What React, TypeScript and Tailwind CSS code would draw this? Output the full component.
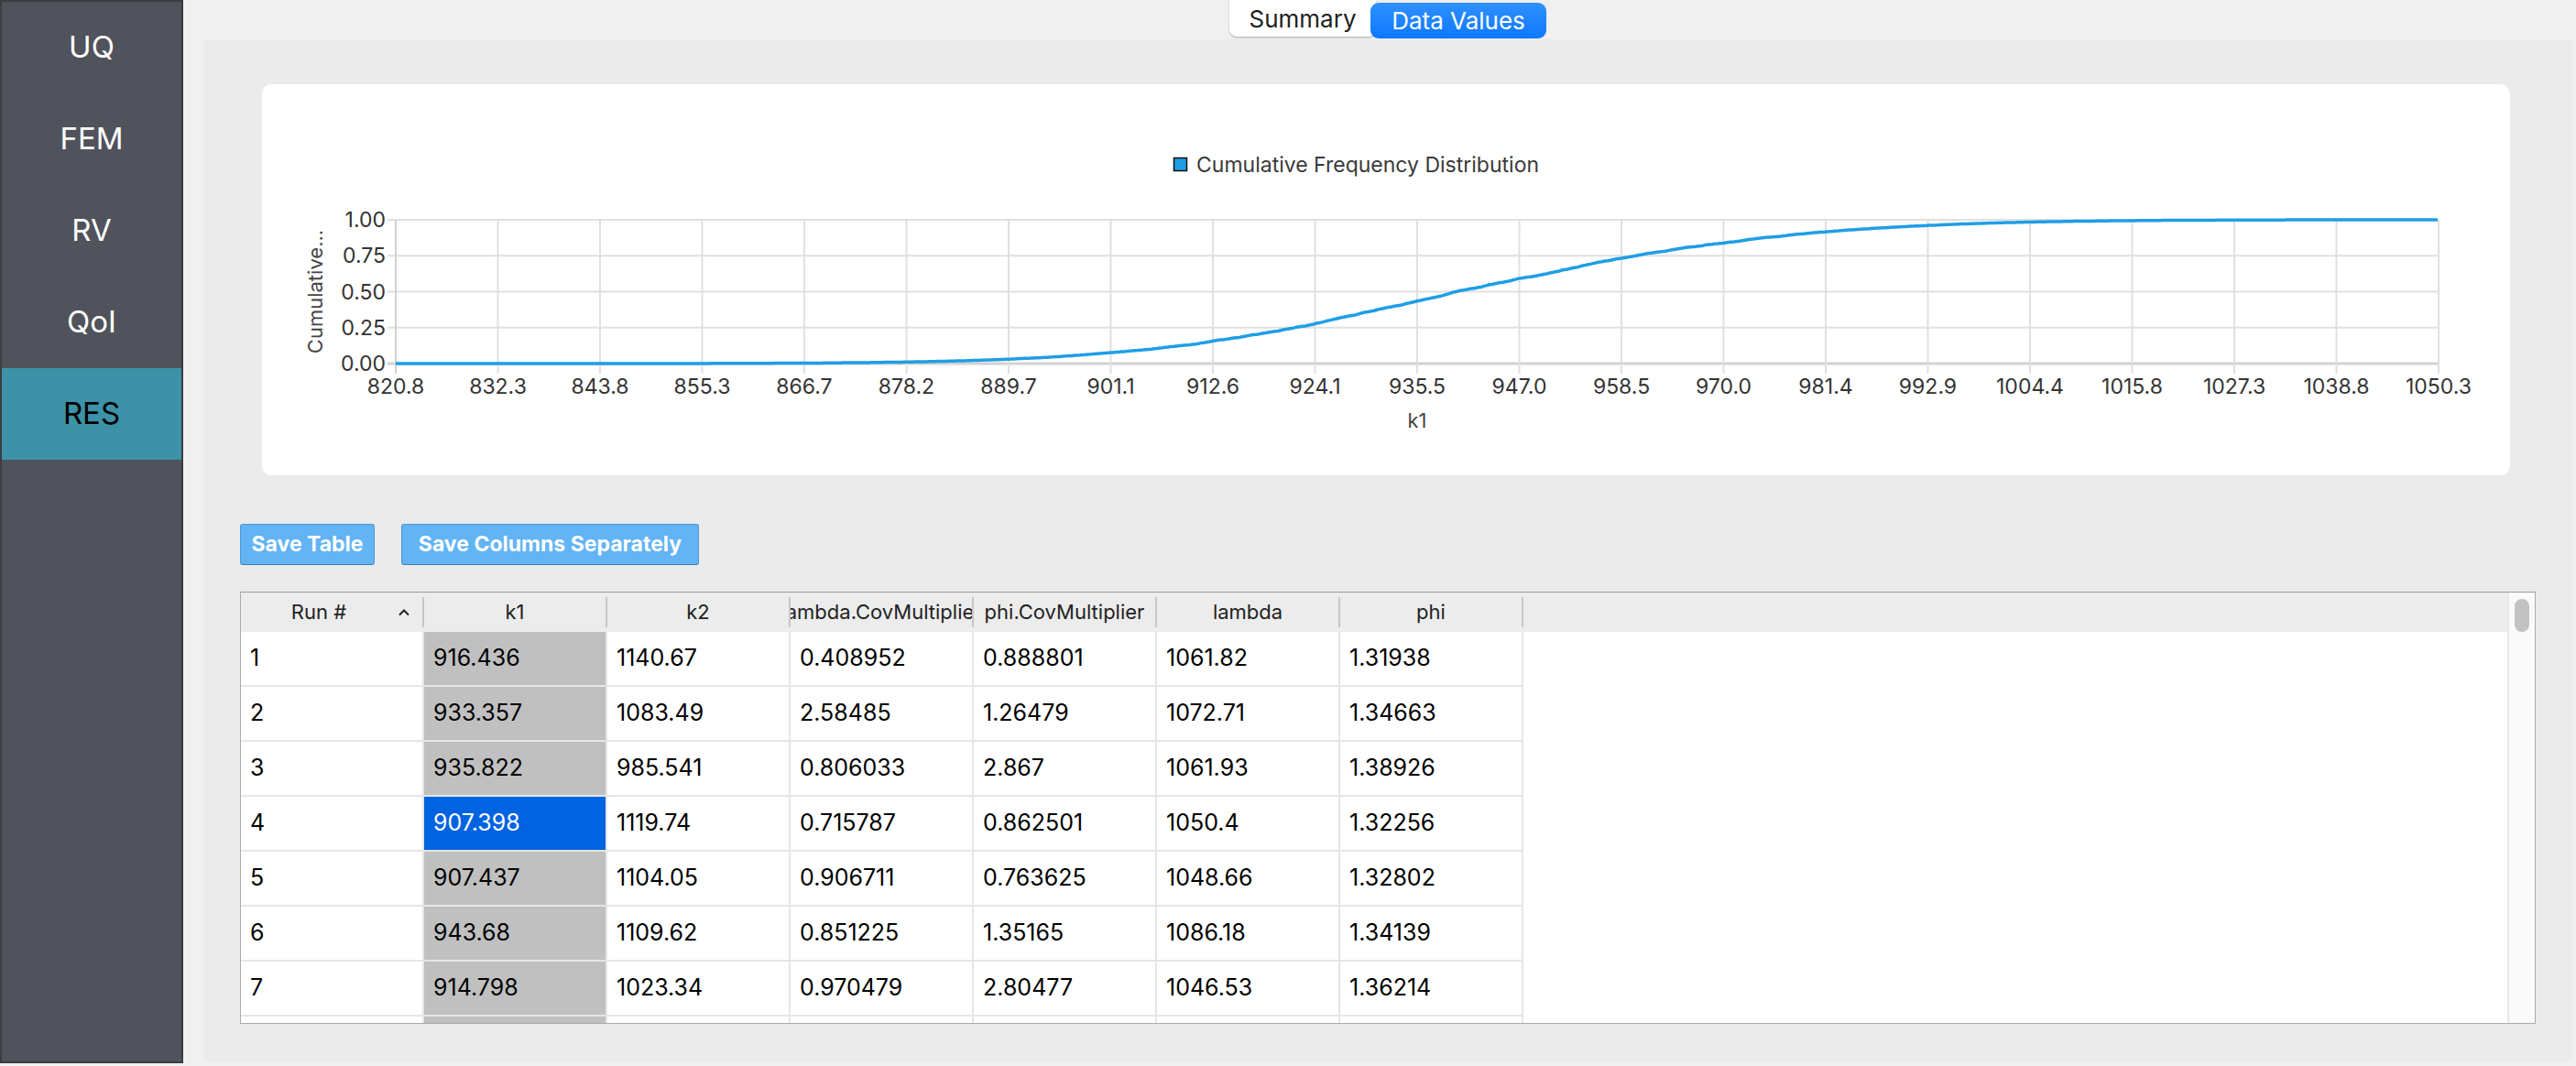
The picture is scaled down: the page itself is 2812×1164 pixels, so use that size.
import React from 'react';

const navItems = ['UQ', 'FEM', 'RV', 'QoI', 'RES'];

const columns = ['Run #', 'k1', 'k2', 'lambda.CovMultiplier', 'phi.CovMultiplier', 'lambda', 'phi'];

const rows: string[][] = [
  ['1', '916.436', '1140.67', '0.408952', '0.888801', '1061.82', '1.31938'],
  ['2', '933.357', '1083.49', '2.58485', '1.26479', '1072.71', '1.34663'],
  ['3', '935.822', '985.541', '0.806033', '2.867', '1061.93', '1.38926'],
  ['4', '907.398', '1119.74', '0.715787', '0.862501', '1050.4', '1.32256'],
  ['5', '907.437', '1104.05', '0.906711', '0.763625', '1048.66', '1.32802'],
  ['6', '943.68', '1109.62', '0.851225', '1.35165', '1086.18', '1.34139'],
  ['7', '914.798', '1023.34', '0.970479', '2.80477', '1046.53', '1.36214'],
  ['', '', '', '', '', '', ''],
];

const xTicks = [
  '820.8', '832.3', '843.8', '855.3', '866.7', '878.2', '889.7', '901.1', '912.6', '924.1', '935.5',
  '947.0', '958.5', '970.0', '981.4', '992.9', '1004.4', '1015.8', '1027.3', '1038.8', '1050.3',
];
const yTicks = ['1.00', '0.75', '0.50', '0.25', '0.00'];

// plot box inside the card
const PX0 = 146;
const PW = 2230;
const PY0 = 148;
const PH = 157;

function erf(v: number) {
  const s = Math.sign(v);
  const x = Math.abs(v);
  const t = 1 / (1 + 0.3275911 * x);
  const y = 1 - ((((1.061405429 * t - 1.453152027) * t + 1.421413741) * t - 0.284496736) * t + 0.254829592) * t * Math.exp(-x * x);
  return s * y;
}

function cdf(k: number) {
  const sd = k < 940 ? 27 : 30;
  return 0.5 * (1 + erf((k - 940) / (sd * Math.SQRT2)));
}

function curvePoints() {
  const pts: string[] = [];
  let seed = 7;
  let drift = 0;
  for (let px = 0; px <= PW; px += 3) {
    seed = (seed * 1103515245 + 12345) % 2147483648;
    const r = seed / 2147483648 - 0.5;
    drift = drift * 0.9 + r * 0.004;
    const k = 820.8 + (px / PW) * 229.5;
    let f = cdf(k);
    f = Math.min(1, Math.max(0, f + drift * f * (1 - f) * 4));
    pts.push(`${(PX0 + px).toFixed(1)},${(PY0 + PH - f * PH).toFixed(1)}`);
  }
  return pts.join(' ');
}

const CdfChart: React.FC = () => {
  const step = PW / 20;
  return (
    <svg width="2454" height="427" viewBox="0 0 2454 427" className="block">
      {/* legend */}
      <rect x="995.5" y="80.5" width="14" height="14" fill="#1f9ee6" stroke="#111" strokeWidth="1.5" />
      <text x="1020" y="96" fontSize="23" fill="#3a3a3a">Cumulative Frequency Distribution</text>

      {/* grid */}
      {yTicks.map((_, i) => {
        const y = PY0 + (i * PH) / 4;
        return <line key={'h' + i} x1={PX0 - 9} x2={PX0 + PW} y1={y} y2={y} stroke={i === 4 ? '#d2d2d2' : '#e0e0e0'} strokeWidth={i === 4 ? 3 : 2} />;
      })}
      {xTicks.map((_, i) => {
        const x = PX0 + i * step;
        return <line key={'v' + i} x1={x} x2={x} y1={PY0} y2={PY0 + PH + 11} stroke={i === 0 ? '#d2d2d2' : '#e0e0e0'} strokeWidth="2" />;
      })}

      {/* y labels */}
      {yTicks.map((t, i) => (
        <text key={t} x="135" y={PY0 + (i * PH) / 4 + 8} fontSize="23" fill="#333" textAnchor="end">{t}</text>
      ))}
      <text x="60" y="226.5" fontSize="22" fill="#444" textAnchor="middle" dominantBaseline="middle" transform="rotate(-90 60 226.5)">Cumulative...</text>

      {/* x labels */}
      {xTicks.map((t, i) => (
        <text key={t} x={PX0 + i * step} y="338" fontSize="23" fill="#333" textAnchor="middle">{t}</text>
      ))}
      <text x={PX0 + PW / 2} y="375" fontSize="22" fill="#444" textAnchor="middle">k1</text>

      <polyline points={curvePoints()} fill="none" stroke="#1f9ee6" strokeWidth="3.5" strokeLinejoin="round" />
    </svg>
  );
};

const ResultsTable: React.FC = () => {
  return (
    <div className="mt-[29px] flex h-[472px] border border-[#ababab] border-t-[#999999]">
      <div className="flex min-w-0 flex-1 flex-col">
        <div className="flex h-[43px] shrink-0 bg-[#ececec]">
          {columns.map((c, i) => (
            <div key={c} className="flex h-full w-[200px] shrink-0 items-center">
              <div className="relative flex h-full min-w-0 flex-1 items-center justify-center overflow-hidden whitespace-nowrap text-[22px] text-[#222]">
                {i === 0 ? (
                  <>
                    <span className="pr-[28px]">{c}</span>
                    <svg width="14" height="9" viewBox="0 0 14 9" className="absolute right-[13px] top-[17px]">
                      <path d="M2 7.5 L7 2.5 L12 7.5" fill="none" stroke="#222" strokeWidth="2" />
                    </svg>
                  </>
                ) : (
                  c
                )}
              </div>
              <div className="h-[33px] w-[2px] shrink-0 bg-[#c6c6c6]" />
            </div>
          ))}
        </div>
        <div className="flex-1 overflow-hidden bg-white">
          {rows.map((r, ri) => (
            <div key={ri} className="flex h-[60px]">
              {r.map((v, ci) => (
                <div
                  key={ci}
                  className={
                    ci === 1
                      ? ri === 3
                        ? 'flex h-full w-[200px] shrink-0 items-center border-b-2 border-r-2 border-[#e6e6e6] bg-[#0063e1] pl-[10px] text-[25px] text-white'
                        : 'flex h-full w-[200px] shrink-0 items-center border-b-2 border-r-2 border-[#e6e6e6] bg-[#c0c0c0] pl-[10px] text-[25px] text-black'
                      : 'flex h-full w-[200px] shrink-0 items-center border-b-2 border-r-2 border-[#e6e6e6] bg-white pl-[10px] text-[25px] text-black'
                  }
                >
                  {v}
                </div>
              ))}
            </div>
          ))}
        </div>
      </div>
      <div className="w-[30px] shrink-0 border-l-2 border-[#e8e8e8] bg-[#fafafa] pt-[7px]">
        <div className="mx-auto h-[36px] w-[16px] rounded-full bg-[#c2c2c2]" />
      </div>
    </div>
  );
};

const App: React.FC = () => {
  return (
    <div className="flex h-[1164px] w-[2812px] overflow-hidden bg-[#f0f0f0] font-['Inter','Liberation_Sans',sans-serif]">
      <aside className="h-[1161px] w-[200px] shrink-0 border-2 border-[#3a3d42] bg-[#50535b]">
        {navItems.map((n) => (
          <div
            key={n}
            className={
              n === 'RES'
                ? 'flex h-[100px] items-center justify-center bg-[#3d92a7] text-[33px] text-black'
                : 'flex h-[100px] items-center justify-center text-[33px] text-white'
            }
          >
            {n}
          </div>
        ))}
      </aside>

      <main className="flex min-w-0 flex-1 flex-col pl-[22px] pr-[4px]">
        <div className="flex h-[43px] shrink-0 items-start justify-center">
          <div className="flex h-[40px] w-[160px] items-center justify-center rounded-b-[8px] bg-white text-[26px] text-[#222] shadow-[0_1px_2px_rgba(0,0,0,0.3)]">
            Summary
          </div>
          <div className="-ml-[6px] mt-[3px] flex h-[39px] w-[192px] items-center justify-center rounded-[9px] bg-linear-to-b from-[#2e90ff] to-[#0a78ff] text-[26px] text-white">
            Data Values
          </div>
        </div>

        <div className="flex h-[1116px] flex-col bg-[#ebebeb] px-[40px] pt-[49px]">
          <div className="ml-[24px] mr-[28px] h-[427px] shrink-0 overflow-hidden rounded-[10px] bg-white">
            <CdfChart />
          </div>

          <div className="mt-[53px] flex gap-[29px]">
            <button className="h-[45px] w-[147px] rounded-[3px] border border-[#4f97d3] border-b-[#3f7fb5] bg-[#62b4f4] text-[23px] font-bold text-white">
              Save Table
            </button>
            <button className="h-[45px] w-[325px] rounded-[3px] border border-[#4f97d3] border-b-[#3f7fb5] bg-[#62b4f4] text-[23px] font-bold text-white">
              Save Columns Separately
            </button>
          </div>

          <ResultsTable />
        </div>
      </main>
    </div>
  );
};

export default App;
